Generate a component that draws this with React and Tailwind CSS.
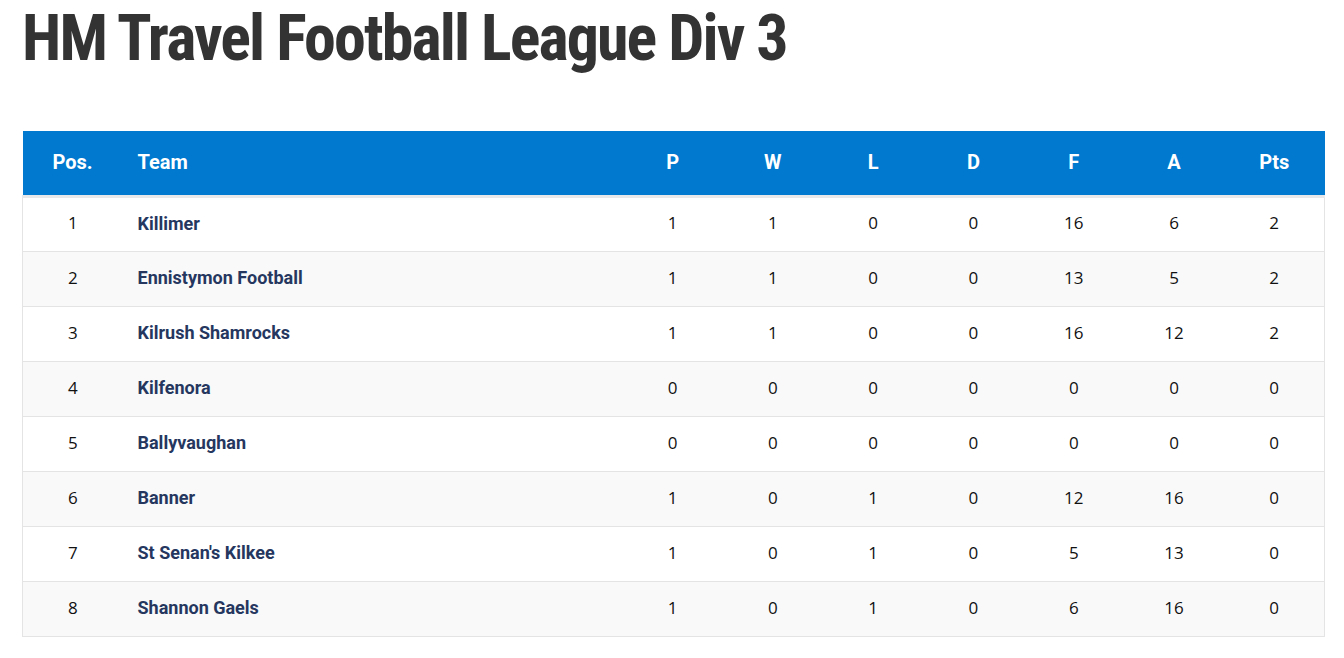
import React from "react";

const teams = [
  { pos: 1, name: "Killimer", p: 1, w: 1, l: 0, d: 0, f: 16, a: 6, pts: 2 },
  { pos: 2, name: "Ennistymon Football", p: 1, w: 1, l: 0, d: 0, f: 13, a: 5, pts: 2 },
  { pos: 3, name: "Kilrush Shamrocks", p: 1, w: 1, l: 0, d: 0, f: 16, a: 12, pts: 2 },
  { pos: 4, name: "Kilfenora", p: 0, w: 0, l: 0, d: 0, f: 0, a: 0, pts: 0 },
  { pos: 5, name: "Ballyvaughan", p: 0, w: 0, l: 0, d: 0, f: 0, a: 0, pts: 0 },
  { pos: 6, name: "Banner", p: 1, w: 0, l: 1, d: 0, f: 12, a: 16, pts: 0 },
  { pos: 7, name: "St Senan's Kilkee", p: 1, w: 0, l: 1, d: 0, f: 5, a: 13, pts: 0 },
  { pos: 8, name: "Shannon Gaels", p: 1, w: 0, l: 1, d: 0, f: 6, a: 16, pts: 0 },
];

const cols = ["P", "W", "L", "D", "F", "A", "Pts"];
const keys = ["p", "w", "l", "d", "f", "a", "pts"];

export default function App() {
  return (
    <div className="min-h-screen bg-white px-[22px] pt-[4px]">
      <h1 className="font-['Roboto',sans-serif] font-bold font-stretch-condensed text-[64px] leading-[70px] text-[#333333] tracking-[-1.9px]">
        HM Travel Football League Div 3
      </h1>
      <table className="mt-[57px] w-[1303px] border-collapse">
        <thead>
          <tr className="bg-[#0079cf] text-white font-['Roboto',sans-serif] font-bold text-[20px]">
            <th className="h-[65px] w-[100px] text-center border-b-[3px] border-[#e6e8ea] pb-[2px]">Pos.</th>
            <th className="h-[65px] text-left pl-[15px] border-b-[3px] border-[#e6e8ea] pb-[2px]">Team</th>
            {cols.map((c) => (
              <th key={c} className="h-[65px] w-[100.3px] text-center border-b-[3px] border-[#e6e8ea] pb-[2px]">{c}</th>
            ))}
          </tr>
        </thead>
        <tbody>
          {teams.map((t, i) => (
            <tr
              key={t.pos}
              className={`h-[55px] border border-[#e4e4e4] ${i % 2 ? "bg-[#f9f9f9]" : "bg-white"}`}
            >
              <td className="text-center font-['Open_Sans',sans-serif] text-[17px] text-[#111] pb-[2px]">{t.pos}</td>
              <td className="pl-[15px] font-['Roboto',sans-serif] font-bold text-[18px] text-[#26375f] pb-[2px]">{t.name}</td>
              {keys.map((k) => (
                <td key={k} className="text-center font-['Open_Sans',sans-serif] text-[17px] text-[#111] pb-[2px]">{t[k]}</td>
              ))}
            </tr>
          ))}
        </tbody>
      </table>
    </div>
  );
}
